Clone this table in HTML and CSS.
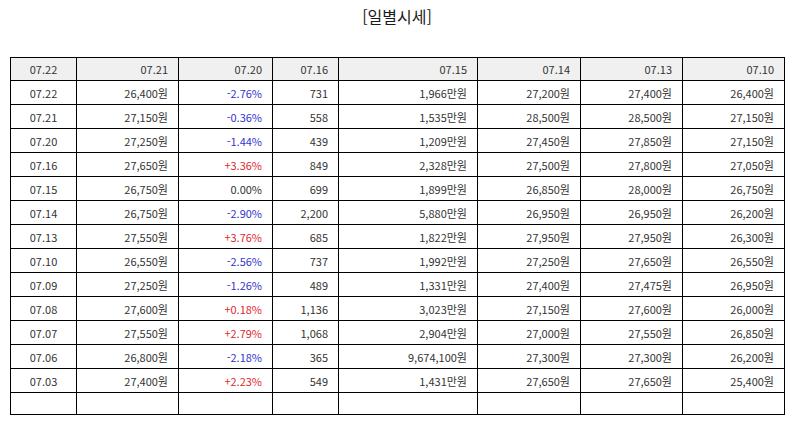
FILE: index.html
```html
<!DOCTYPE html>
<html lang="ko">
<head>
<meta charset="utf-8">
<link rel="stylesheet" href="styles.css">
</head>
<body>
<div class="page">
  <h1 class="title">[일별시세]</h1>
  <table class="quotes">
    <colgroup>
      <col class="c1"><col class="c2"><col class="c3"><col class="c4"><col class="c5"><col class="c6"><col class="c7"><col class="c8">
    </colgroup>
    <thead>
      <tr><th class="date">07.22</th><th>07.21</th><th>07.20</th><th>07.16</th><th>07.15</th><th>07.14</th><th>07.13</th><th>07.10</th></tr>
    </thead>
    <tbody>
      <tr><td class="date">07.22</td><td>26,400원</td><td class="down">-2.76%</td><td>731</td><td>1,966만원</td><td>27,200원</td><td>27,400원</td><td>26,400원</td></tr>
      <tr><td class="date">07.21</td><td>27,150원</td><td class="down">-0.36%</td><td>558</td><td>1,535만원</td><td>28,500원</td><td>28,500원</td><td>27,150원</td></tr>
      <tr><td class="date">07.20</td><td>27,250원</td><td class="down">-1.44%</td><td>439</td><td>1,209만원</td><td>27,450원</td><td>27,850원</td><td>27,150원</td></tr>
      <tr><td class="date">07.16</td><td>27,650원</td><td class="up">+3.36%</td><td>849</td><td>2,328만원</td><td>27,500원</td><td>27,800원</td><td>27,050원</td></tr>
      <tr><td class="date">07.15</td><td>26,750원</td><td>0.00%</td><td>699</td><td>1,899만원</td><td>26,850원</td><td>28,000원</td><td>26,750원</td></tr>
      <tr><td class="date">07.14</td><td>26,750원</td><td class="down">-2.90%</td><td>2,200</td><td>5,880만원</td><td>26,950원</td><td>26,950원</td><td>26,200원</td></tr>
      <tr><td class="date">07.13</td><td>27,550원</td><td class="up">+3.76%</td><td>685</td><td>1,822만원</td><td>27,950원</td><td>27,950원</td><td>26,300원</td></tr>
      <tr><td class="date">07.10</td><td>26,550원</td><td class="down">-2.56%</td><td>737</td><td>1,992만원</td><td>27,250원</td><td>27,650원</td><td>26,550원</td></tr>
      <tr><td class="date">07.09</td><td>27,250원</td><td class="down">-1.26%</td><td>489</td><td>1,331만원</td><td>27,400원</td><td>27,475원</td><td>26,950원</td></tr>
      <tr><td class="date">07.08</td><td>27,600원</td><td class="up">+0.18%</td><td>1,136</td><td>3,023만원</td><td>27,150원</td><td>27,600원</td><td>26,000원</td></tr>
      <tr><td class="date">07.07</td><td>27,550원</td><td class="up">+2.79%</td><td>1,068</td><td>2,904만원</td><td>27,000원</td><td>27,550원</td><td>26,850원</td></tr>
      <tr><td class="date">07.06</td><td>26,800원</td><td class="down">-2.18%</td><td>365</td><td>9,674,100원</td><td>27,300원</td><td>27,300원</td><td>26,200원</td></tr>
      <tr><td class="date">07.03</td><td>27,400원</td><td class="up">+2.23%</td><td>549</td><td>1,431만원</td><td>27,650원</td><td>27,650원</td><td>25,400원</td></tr>
      <tr class="empty"><td></td><td></td><td></td><td></td><td></td><td></td><td></td><td></td></tr>
    </tbody>
  </table>
</div>
</body>
</html>
```

FILE: styles.css
```css
html, body {
  margin: 0;
  padding: 0;
  background: #ffffff;
}

.page {
  width: 794px;
  padding: 0 0 0 10px;
  box-sizing: border-box;
  font-family: "Noto Sans CJK KR", "Noto Sans", sans-serif;
  color: #333333;
}

.title {
  margin: 0;
  width: 774px;
  height: 57px;
  padding-top: 5px;
  box-sizing: border-box;
  text-align: center;
  font-size: 16px;
  font-weight: normal;
  line-height: 22px;
  color: #1a1a1a;
}

.quotes {
  border-collapse: collapse;
  table-layout: fixed;
  width: 775px;
  font-size: 11px;
}

.c1 { width: 66px; }
.c2 { width: 102px; }
.c3 { width: 94px; }
.c4 { width: 66px; }
.c5 { width: 139px; }
.c6 { width: 103px; }
.c7 { width: 102px; }
.c8 { width: 102px; }

.quotes th,
.quotes td {
  border: 1px solid #000000;
  height: 24px;
  padding: 0 10px 0 4px;
  box-sizing: border-box;
  text-align: right;
  font-weight: normal;
  line-height: 14px;
  white-space: nowrap;
}

.quotes thead th {
  background: #f0f0f0;
  height: 23px;
}

.quotes .date {
  text-align: center;
  padding: 0;
}

.quotes .down { color: #3333cc; }
.quotes .up { color: #e0282e; }

.quotes .empty td { height: 22px; }
```
